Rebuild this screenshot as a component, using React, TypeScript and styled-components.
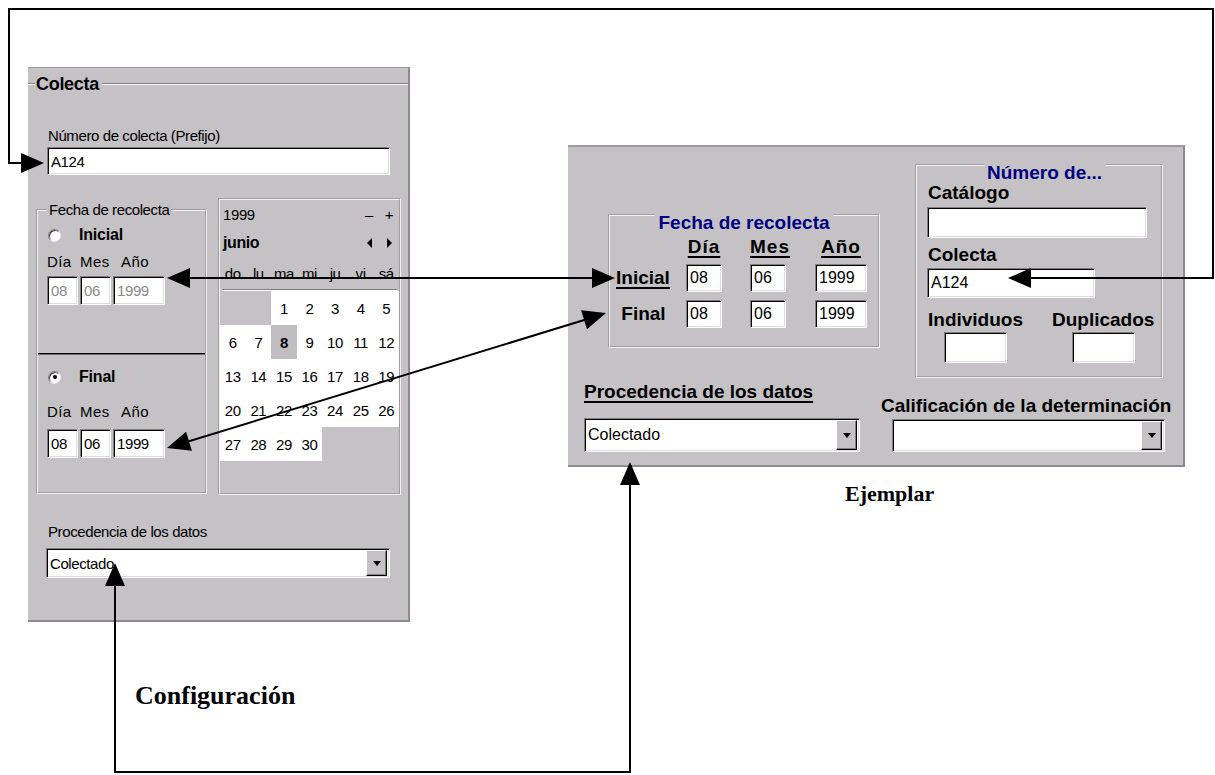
import React from 'react'
import styled, { createGlobalStyle } from 'styled-components'

const WIN_GRAY = '#c4c2c5'
const SANS = `"Liberation Sans", Arial, sans-serif`
const SERIF = `"Liberation Serif", "Times New Roman", serif`

const GlobalStyle = createGlobalStyle`
  html, body {
    margin: 0;
    padding: 0;
    background: #fff;
  }
  body {
    font-family: ${SANS};
    color: #000;
  }
`

const Page = styled.div`
  position: relative;
  width: 1215px;
  height: 775px;
  overflow: hidden;
  display: flex;
  align-items: flex-start;
  background: #fff;
`

const Column = styled.div<{ $top: number; $left: number }>`
  display: flex;
  flex-direction: column;
  margin: ${p => p.$top}px 0 0 ${p => p.$left}px;
`

const Window = styled.div<{ $w: number; $h: number; $topBorder: number }>`
  box-sizing: border-box;
  width: ${p => p.$w}px;
  height: ${p => p.$h}px;
  background: ${WIN_GRAY};
  border-top: ${p => p.$topBorder}px solid #9c9a9e;
  border-right: 2px solid #8d8b8f;
  border-bottom: 2px solid #8d8b8f;
  display: flex;
  flex-direction: column;
`

const Caption = styled.div<{ $top: number; $indent: number; $size: number }>`
  margin: ${p => p.$top}px 0 0 ${p => p.$indent}px;
  font-family: ${SERIF};
  font-weight: bold;
  font-size: ${p => p.$size}px;
  line-height: 1;
`

/* ---------- shared win95 bits ---------- */

const Sunken = styled.div<{ $w: number; $h: number; $mt?: number; $ml?: number; $large?: boolean; $disabled?: boolean }>`
  box-sizing: border-box;
  width: ${p => p.$w}px;
  height: ${p => p.$h}px;
  margin: ${p => p.$mt ?? 0}px 0 0 ${p => p.$ml ?? 0}px;
  background: #fff;
  border: 1px solid;
  border-color: #808080 #fff #fff #808080;
  box-shadow: inset 1px 1px 0 #000, inset -1px -1px 0 #dcdcdc;
  display: flex;
  align-items: center;
  padding: 0 2px 0 3px;
  font-family: ${SANS};
  font-size: ${p => (p.$large ? 16 : 15)}px;
  letter-spacing: ${p => (p.$large ? 0 : -0.4)}px;
  color: ${p => (p.$disabled ? '#8a8a8a' : '#000')};
  white-space: nowrap;
`

const SelectValue = styled.span`
  flex: 1;
`

const DropButton = styled.span`
  box-sizing: border-box;
  width: 21px;
  align-self: stretch;
  margin: 1px 0 1px;
  background: ${WIN_GRAY};
  border: 1px solid;
  border-color: #fff #000 #000 #fff;
  box-shadow: inset -1px -1px 0 #808080;
  display: flex;
  align-items: center;
  justify-content: center;

  &::after {
    content: '';
    border-left: 4px solid transparent;
    border-right: 4px solid transparent;
    border-top: 5px solid #000;
  }
`

const GroupBox = styled.fieldset<{ $w: number; $h: number; $mt: number; $ml?: number; $pl: number }>`
  box-sizing: border-box;
  width: ${p => p.$w}px;
  height: ${p => p.$h}px;
  margin: ${p => p.$mt}px 0 0 ${p => p.$ml ?? 0}px;
  padding: 0 0 0 ${p => p.$pl}px;
  min-width: 0;
  border: 2px groove #f2f2f2;
  display: flex;
  flex-direction: column;
  align-items: flex-start;
`

const Legend = styled.legend<{ $hang?: boolean }>`
  padding: ${p => (p.$hang ? '16px 3px 0' : '0 2px')};
  margin: ${p => (p.$hang ? '0 auto' : '0')};
  font-family: ${SANS};
  font-weight: ${p => (p.$hang ? 'bold' : 'normal')};
  font-size: ${p => (p.$hang ? 19 : 15)}px;
  letter-spacing: ${p => (p.$hang ? 0 : -0.4)}px;
  line-height: ${p => (p.$hang ? 18 : 16)}px;
  color: ${p => (p.$hang ? '#000080' : '#000')};
`

/* ---------- left window (Configuración) ---------- */

const TitleRow = styled.div`
  display: flex;
  align-items: center;
  height: 18px;
  margin-top: 7px;
`

const EtchLine = styled.span<{ $w?: number }>`
  box-sizing: border-box;
  height: 2px;
  ${p => (p.$w ? `width: ${p.$w}px;` : 'flex: 1;')}
  border-top: 1px solid #808080;
  border-bottom: 1px solid #fff;
`

const GroupTitle = styled.span`
  padding: 0 3px 0 1px;
  font-family: ${SANS};
  font-weight: bold;
  font-size: 18px;
  letter-spacing: -0.3px;
  line-height: 18px;
`

const LeftBody = styled.div`
  display: flex;
  flex-direction: column;
  align-items: flex-start;
  padding-left: 8px;
`

const SmallLabel = styled.div<{ $mt: number; $ml?: number }>`
  margin: ${p => p.$mt}px 0 0 ${p => p.$ml ?? 0}px;
  font-family: ${SANS};
  font-size: 15px;
  letter-spacing: -0.4px;
  line-height: 16px;
  white-space: nowrap;
`

const DateArea = styled.div`
  display: flex;
  align-items: flex-start;
  margin-top: 23px;
`

const RadioRow = styled.div<{ $mt: number }>`
  display: flex;
  align-items: center;
  height: 18px;
  margin-top: ${p => p.$mt}px;
  padding-left: 1px;
  gap: 18px;
  font-family: ${SANS};
  font-weight: bold;
  font-size: 16px;
  letter-spacing: -0.2px;
`

const Radio = styled.span<{ $checked?: boolean }>`
  box-sizing: border-box;
  width: 13px;
  height: 13px;
  border-radius: 50%;
  background: #fff;
  border: 1px solid;
  border-color: #808080 #e8e8e8 #e8e8e8 #808080;
  box-shadow: inset 1px 1px 0 #404040;
  display: flex;
  align-items: center;
  justify-content: center;

  &::after {
    content: '';
    width: 4px;
    height: 4px;
    border-radius: 50%;
    background: ${p => (p.$checked ? '#000' : 'transparent')};
  }
`

const DateGrid = styled.div<{ $mt: number }>`
  display: grid;
  grid-template-columns: 31px 31px 52px;
  column-gap: 2px;
  margin-top: ${p => p.$mt}px;
`

const DateLabel = styled.span<{ $pl?: number }>`
  padding-left: ${p => p.$pl ?? 0}px;
  font-family: ${SANS};
  font-size: 15px;
  line-height: 16px;
  letter-spacing: 0.4px;
`

const Divider = styled.div`
  align-self: stretch;
  margin: 48px 0 0 -9px;
  height: 2px;
  border-top: 1px solid #000;
  border-bottom: 1px solid #6e6c70;
  box-sizing: border-box;
`

const Calendar = styled.div`
  box-sizing: border-box;
  width: 183px;
  height: 297px;
  margin-left: 11px;
  border: 2px groove #f2f2f2;
  display: flex;
  flex-direction: column;
  font-family: ${SANS};
  font-size: 15px;
  letter-spacing: -0.4px;
`

const CalHeader = styled.div<{ $h: number; $bold?: boolean }>`
  display: flex;
  align-items: center;
  height: ${p => p.$h}px;
  padding-left: 3px;
  font-weight: ${p => (p.$bold ? 'bold' : 'normal')};
  font-size: ${p => (p.$bold ? 16 : 15)}px;
`

const CalTitle = styled.span`
  flex: 1;
`

const CalButton = styled.span`
  width: 20px;
  display: flex;
  justify-content: center;
`

const Tri = styled.span<{ $dir: 'left' | 'right' }>`
  width: 0;
  height: 0;
  border-top: 5px solid transparent;
  border-bottom: 5px solid transparent;
  ${p => (p.$dir === 'left' ? 'border-right: 5px solid #000;' : 'border-left: 5px solid #000;')}
`

const CalGrid = styled.div<{ $rowH: number }>`
  display: grid;
  grid-template-columns: repeat(7, 1fr);
  grid-auto-rows: ${p => p.$rowH}px;
`

const WeekDay = styled.span`
  display: flex;
  align-items: center;
  justify-content: center;
`

const CalRule = styled.div`
  height: 2px;
  margin: 1px 2px 0;
  border-top: 1px solid #808080;
  border-bottom: 1px solid #fff;
  box-sizing: border-box;
`

const DayCell = styled.span<{ $kind: 'empty' | 'day' | 'today' }>`
  display: flex;
  align-items: center;
  justify-content: center;
  background: ${p => (p.$kind === 'day' ? '#fff' : p.$kind === 'today' ? '#c0bec1' : 'transparent')};
  font-weight: ${p => (p.$kind === 'today' ? 'bold' : 'normal')};
`

/* ---------- right window (Ejemplar) ---------- */

const RightTop = styled.div`
  display: flex;
  align-items: flex-start;
  padding-left: 40px;
`

const BoldLabel = styled.div<{ $mt?: number; $underline?: boolean }>`
  margin-top: ${p => p.$mt ?? 0}px;
  font-family: ${SANS};
  font-weight: bold;
  font-size: 19px;
  line-height: 18px;
  white-space: nowrap;
  text-decoration: ${p => (p.$underline ? 'underline' : 'none')};
  text-decoration-thickness: 2px;
  text-underline-offset: 3px;
`

const FechaGrid = styled.div`
  display: grid;
  grid-template-columns: 70px 64px 65px 52px;
  grid-template-rows: 18px 28px 28px;
  row-gap: 8px;
  margin-top: 6px;
  padding-left: 6px;
  align-items: center;
`

const ColHead = styled(BoldLabel)<{ $w: number }>`
  width: ${p => p.$w}px;
  text-align: center;
  letter-spacing: 1px;
`

const CountRow = styled.div`
  display: flex;
  gap: 29px;
  margin-top: 13px;
`

const CountCol = styled.div`
  display: flex;
  flex-direction: column;
  align-items: center;
`

const RightBottom = styled.div`
  display: flex;
  align-items: flex-end;
  margin-top: 5px;
  padding-left: 16px;
`

const SelectCol = styled.div<{ $ml?: number }>`
  display: flex;
  flex-direction: column;
  align-items: flex-start;
  margin-left: ${p => p.$ml ?? 0}px;
`

/* ---------- arrows ---------- */

const Overlay = styled.svg`
  position: absolute;
  left: 0;
  top: 0;
  pointer-events: none;
`

function head(tx: number, ty: number, fx: number, fy: number, len = 23, half = 10) {
  const dx = tx - fx
  const dy = ty - fy
  const l = Math.hypot(dx, dy)
  const ux = dx / l
  const uy = dy / l
  const bx = tx - ux * len
  const by = ty - uy * len
  return `${tx},${ty} ${bx - uy * half},${by + ux * half} ${bx + uy * half},${by - ux * half}`
}

function Arrows() {
  const heads = [
    head(44, 163, 9, 163),
    head(1008, 278, 1213, 278),
    head(167, 278, 615, 278),
    head(615, 278, 167, 278),
    head(167, 448, 606, 313),
    head(606, 313, 167, 448),
    head(115, 563, 115, 772),
    head(630, 462, 630, 772),
  ]
  return (
    <Overlay width={1215} height={775} viewBox="0 0 1215 775">
      <g fill="none" stroke="#000" strokeWidth={2}>
        <polyline points="30,163 9,163 9,9 1213,9 1213,278 1020,278" />
        <line x1={180} y1={278} x2={600} y2={278} />
        <line x1={180} y1={444} x2={594} y2={317} />
        <polyline points="115,575 115,772 630,772 630,475" />
      </g>
      <g fill="#000">
        {heads.map((pts, i) => (
          <polygon key={i} points={pts} />
        ))}
      </g>
    </Overlay>
  )
}

/* ---------- data ---------- */

const WEEKDAYS = ['do', 'lu', 'ma', 'mi', 'ju', 'vi', 'sá']
const JUNE: (number | null)[] = [
  null,
  null,
  ...Array.from({ length: 30 }, (_, i) => i + 1),
  null,
  null,
  null,
]

function DateInputs({ disabled, mt }: { disabled?: boolean; mt: number }) {
  return (
    <>
      <DateGrid $mt={mt}>
        <DateLabel>Día</DateLabel>
        <DateLabel>Mes</DateLabel>
        <DateLabel $pl={8}>Año</DateLabel>
      </DateGrid>
      <DateGrid $mt={disabled ? 6 : 9}>
        <Sunken $w={31} $h={29} $disabled={disabled}>08</Sunken>
        <Sunken $w={31} $h={29} $disabled={disabled}>06</Sunken>
        <Sunken $w={52} $h={29} $disabled={disabled}>1999</Sunken>
      </DateGrid>
    </>
  )
}

function Configuracion() {
  return (
    <Column $top={67} $left={28}>
      <Window $w={382} $h={555} $topBorder={1}>
        <TitleRow>
          <EtchLine $w={7} />
          <GroupTitle>Colecta</GroupTitle>
          <EtchLine />
        </TitleRow>
        <LeftBody>
          <SmallLabel $mt={35} $ml={12}>Número de colecta (Prefijo)</SmallLabel>
          <Sunken $w={343} $h={28} $mt={3} $ml={11}>A124</Sunken>

          <DateArea>
            <GroupBox $w={171} $h={292} $mt={4} $pl={9}>
              <Legend>Fecha de recolecta</Legend>
              <RadioRow $mt={8}>
                <Radio />
                Inicial
              </RadioRow>
              <DateInputs disabled mt={10} />
              <Divider />
              <RadioRow $mt={13}>
                <Radio $checked />
                Final
              </RadioRow>
              <DateInputs mt={18} />
            </GroupBox>

            <Calendar>
              <CalHeader $h={28}>
                <CalTitle>1999</CalTitle>
                <CalButton>–</CalButton>
                <CalButton>+</CalButton>
              </CalHeader>
              <CalHeader $h={30} $bold>
                <CalTitle>junio</CalTitle>
                <CalButton><Tri $dir="left" /></CalButton>
                <CalButton><Tri $dir="right" /></CalButton>
              </CalHeader>
              <CalGrid $rowH={30}>
                {WEEKDAYS.map(d => (
                  <WeekDay key={d}>{d}</WeekDay>
                ))}
              </CalGrid>
              <CalRule />
              <CalGrid $rowH={34}>
                {JUNE.map((d, i) => (
                  <DayCell key={i} $kind={d === null ? 'empty' : d === 8 ? 'today' : 'day'}>
                    {d ?? ''}
                  </DayCell>
                ))}
              </CalGrid>
            </Calendar>
          </DateArea>

          <SmallLabel $mt={29} $ml={12}>Procedencia de los datos</SmallLabel>
          <Sunken $w={344} $h={30} $mt={8} $ml={10}>
            <SelectValue>Colectado</SelectValue>
            <DropButton />
          </Sunken>
        </LeftBody>
      </Window>
      <Caption $top={61} $indent={107} $size={26}>Configuración</Caption>
    </Column>
  )
}

function Ejemplar() {
  return (
    <Column $top={145} $left={158}>
      <Window $w={617} $h={322} $topBorder={2}>
        <RightTop>
          <GroupBox $w={272} $h={150} $mt={51} $pl={0}>
            <Legend $hang>Fecha de recolecta</Legend>
            <FechaGrid>
              <span />
              <ColHead $w={36} $underline>Día</ColHead>
              <ColHead $w={36} $underline>Mes</ColHead>
              <ColHead $w={52} $underline>Año</ColHead>

              <BoldLabel $underline>Inicial</BoldLabel>
              <Sunken $w={36} $h={28} $large>08</Sunken>
              <Sunken $w={36} $h={28} $large>06</Sunken>
              <Sunken $w={52} $h={28} $large>1999</Sunken>

              <BoldLabel>&nbsp;Final</BoldLabel>
              <Sunken $w={36} $h={28} $large>08</Sunken>
              <Sunken $w={36} $h={28} $large>06</Sunken>
              <Sunken $w={52} $h={28} $large>1999</Sunken>
            </FechaGrid>
          </GroupBox>

          <GroupBox $w={248} $h={230} $mt={1} $ml={35} $pl={11}>
            <Legend $hang>Número de...</Legend>
            <BoldLabel $mt={2}>Catálogo</BoldLabel>
            <Sunken $w={220} $h={31} $mt={5} $ml={-1} $large />
            <BoldLabel $mt={8}>Colecta</BoldLabel>
            <Sunken $w={168} $h={30} $mt={4} $ml={-1} $large>A124</Sunken>
            <CountRow>
              <CountCol>
                <BoldLabel>Individuos</BoldLabel>
                <Sunken $w={63} $h={31} $mt={3} $large />
              </CountCol>
              <CountCol>
                <BoldLabel>Duplicados</BoldLabel>
                <Sunken $w={63} $h={31} $mt={3} $large />
              </CountCol>
            </CountRow>
          </GroupBox>
        </RightTop>

        <RightBottom>
          <SelectCol>
            <BoldLabel $underline>Procedencia de los datos</BoldLabel>
            <Sunken $w={276} $h={34} $mt={17} $large>
              <SelectValue>Colectado</SelectValue>
              <DropButton />
            </Sunken>
          </SelectCol>
          <SelectCol $ml={21}>
            <BoldLabel>Calificación de la determinación</BoldLabel>
            <Sunken $w={273} $h={33} $mt={4} $ml={11} $large>
              <SelectValue />
              <DropButton />
            </Sunken>
          </SelectCol>
        </RightBottom>
      </Window>
      <Caption $top={16} $indent={277} $size={22}>Ejemplar</Caption>
    </Column>
  )
}

export default function App() {
  return (
    <>
      <GlobalStyle />
      <Page>
        <Configuracion />
        <Ejemplar />
        <Arrows />
      </Page>
    </>
  )
}
